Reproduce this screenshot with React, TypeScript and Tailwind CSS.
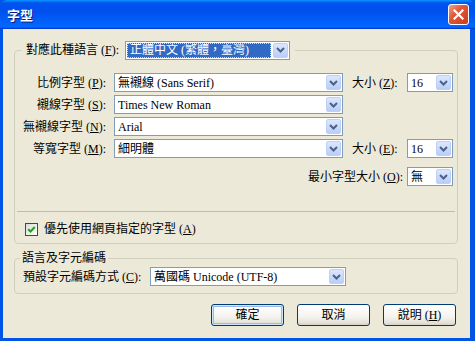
import React from "react";

const FONT = "font-['Liberation_Serif','Noto_Sans_CJK_TC',serif]";

function Chevron() {
  return (
    <svg width="9" height="6" viewBox="0 0 9 6">
      <path d="M1 1 L4.5 4.5 L8 1" stroke="#4D6185" strokeWidth="2" fill="none" />
    </svg>
  );
}

function Arrow() {
  return (
    <div className="my-[1px] mr-[1px] w-[15px] flex items-center justify-center rounded-[2px] border border-[#BCD0F8] bg-[linear-gradient(180deg,#DCE7FE,#B8CDF9)]">
      <Chevron />
    </div>
  );
}

function Combo({
  w,
  value,
  selected,
}: {
  w: string;
  value: React.ReactNode;
  selected?: boolean;
}) {
  return (
    <div className={`flex h-[19px] shrink-0 border border-[#7F9DB9] bg-white ${w}`}>
      {selected ? (
        <div className="flex-1 min-w-0 m-[1px] mr-[2px] flex items-center pl-[2px] bg-[#316AC5] text-white border border-dotted border-[#C9D8F2] whitespace-nowrap overflow-hidden leading-[14px]">
          {value}
        </div>
      ) : (
        <div className="flex-1 min-w-0 flex items-center pl-[3px] whitespace-nowrap overflow-hidden leading-[14px] text-black">
          {value}
        </div>
      )}
      <Arrow />
    </div>
  );
}

function Label({ text, k }: { text: string; k: string }) {
  return (
    <span className="whitespace-nowrap">
      {text} (<u>{k}</u>):
    </span>
  );
}

function FontRow({
  label,
  k,
  value,
  size,
}: {
  label: string;
  k: string;
  value: string;
  size?: { k: string; v: string };
}) {
  return (
    <div className="flex items-center h-[19px]">
      <div className="w-[91px] text-right leading-[14px]">
        <Label text={label} k={k} />
      </div>
      <div className="ml-[8px]">
        <Combo w="w-[229px]" value={value} />
      </div>
      {size && (
        <>
          <div className="ml-[9px] w-[55px] leading-[14px]">
            <Label text="大小" k={size.k} />
          </div>
          <Combo w="w-[46px]" value={size.v} />
        </>
      )}
    </div>
  );
}

function Button({ children, def }: { children: React.ReactNode; def?: boolean }) {
  return (
    <div
      className={`w-[73px] h-[22px] flex items-center justify-center rounded-[3px] border border-[#003C74] bg-[linear-gradient(180deg,#FFFFFF_0%,#F4F3EE_60%,#E3E0D6_90%,#D6D0C5_100%)] leading-[14px] ${
        def ? "shadow-[inset_0_0_0_1px_#CEE7FF,inset_0_0_0_2px_#98B8EA]" : ""
      }`}
    >
      {children}
    </div>
  );
}

export default function App() {
  return (
    <div className={`w-[475px] h-[341px] flex flex-col bg-[#0055E5] text-[12px] text-black ${FONT}`}>
      {/* Title bar */}
      <div className="h-[29px] shrink-0 flex items-center justify-between pl-[7px] pr-[6px] rounded-t-[7px] bg-[linear-gradient(180deg,#0997FF_0%,#0053EE_10%,#0050EE_40%,#0066FF_88%,#0066FF_93%,#005BFF_95%,#003DD7_97%,#003DD7_100%)]">
        <span className="font-['Noto_Sans_CJK_TC',sans-serif] font-bold text-[13px] leading-[16px] text-white [text-shadow:1px_1px_0_#0A1883]">
          字型
        </span>
        <div className="w-[21px] h-[21px] flex items-center justify-center rounded-[3px] border border-white bg-[linear-gradient(135deg,#EEA58E_0%,#E0573A_40%,#C83F1E_100%)]">
          <svg width="11" height="11" viewBox="0 0 11 11">
            <path d="M1.5 1.5 L9.5 9.5 M9.5 1.5 L1.5 9.5" stroke="white" strokeWidth="2.2" strokeLinecap="square" />
          </svg>
        </div>
      </div>

      {/* Body */}
      <div className="flex-1 ml-[3px] mr-[5px] mb-[3px] bg-[#ECE9D8] flex flex-col">
        {/* Group 1 */}
        <fieldset className="mt-[11px] ml-[11px] mr-[12px] border border-[#D0D0BF] rounded-[4px] pt-[13px] pb-[7px]">
          <legend className="ml-[6px] px-[5px] h-[20px]">
            <div className="flex items-center h-[20px]">
              <div className="w-[99px] leading-[14px]">
                <Label text="對應此種語言" k="F" />
              </div>
              <Combo w="w-[165px]" value="正體中文 (繁體，臺灣)" selected />
            </div>
          </legend>

          <div className="flex flex-col gap-[3px]">
            <FontRow label="比例字型" k="P" value="無襯線 (Sans Serif)" size={{ k: "Z", v: "16" }} />
            <FontRow label="襯線字型" k="S" value="Times New Roman" />
            <FontRow label="無襯線字型" k="N" value="Arial" />
            <FontRow label="等寬字型" k="M" value="細明體" size={{ k: "E", v: "16" }} />
          </div>

          <div className="mt-[9px] flex items-center justify-end pr-[4px] h-[19px]">
            <div className="pr-[4px] leading-[14px]">
              <Label text="最小字型大小" k="O" />
            </div>
            <Combo w="w-[46px]" value="無" />
          </div>

          <div className="mt-[25px] mx-[2px] border-t border-[#C0BDAD]" />

          <div className="mt-[10px] flex items-center pl-[10px] h-[14px]">
            <div className="w-[13px] h-[13px] flex items-center justify-center border border-[#1C5180] bg-[linear-gradient(135deg,#DCDCD7,#FFFFFF)]">
              <svg width="9" height="9" viewBox="0 0 9 9">
                <path d="M1.2 4.2 L3.5 6.5 L7.8 2" stroke="#21A121" strokeWidth="2" fill="none" />
              </svg>
            </div>
            <span className="ml-[6px] leading-[14px]">
              優先使用網頁指定的字型 (<u>A</u>)
            </span>
          </div>
        </fieldset>

        {/* Group 2 */}
        <fieldset className="mt-[7px] ml-[11px] mr-[12px] border border-[#D0D0BF] rounded-[4px] pt-[2px] pb-[7px] pl-[8px]">
          <legend className="ml-[-3px] px-[2px] leading-[14px]">語言及字元編碼</legend>
          <div className="flex items-center h-[19px]">
            <div className="w-[127px] leading-[14px]">
              <Label text="預設字元編碼方式" k="C" />
            </div>
            <Combo w="w-[196px]" value="萬國碼 Unicode (UTF-8)" />
          </div>
        </fieldset>

        {/* Buttons */}
        <div className="mt-[10px] flex justify-end gap-[13px] pr-[14px]">
          <Button def>確定</Button>
          <Button>取消</Button>
          <Button>
            說明 (<u>H</u>)
          </Button>
        </div>
      </div>
    </div>
  );
}
